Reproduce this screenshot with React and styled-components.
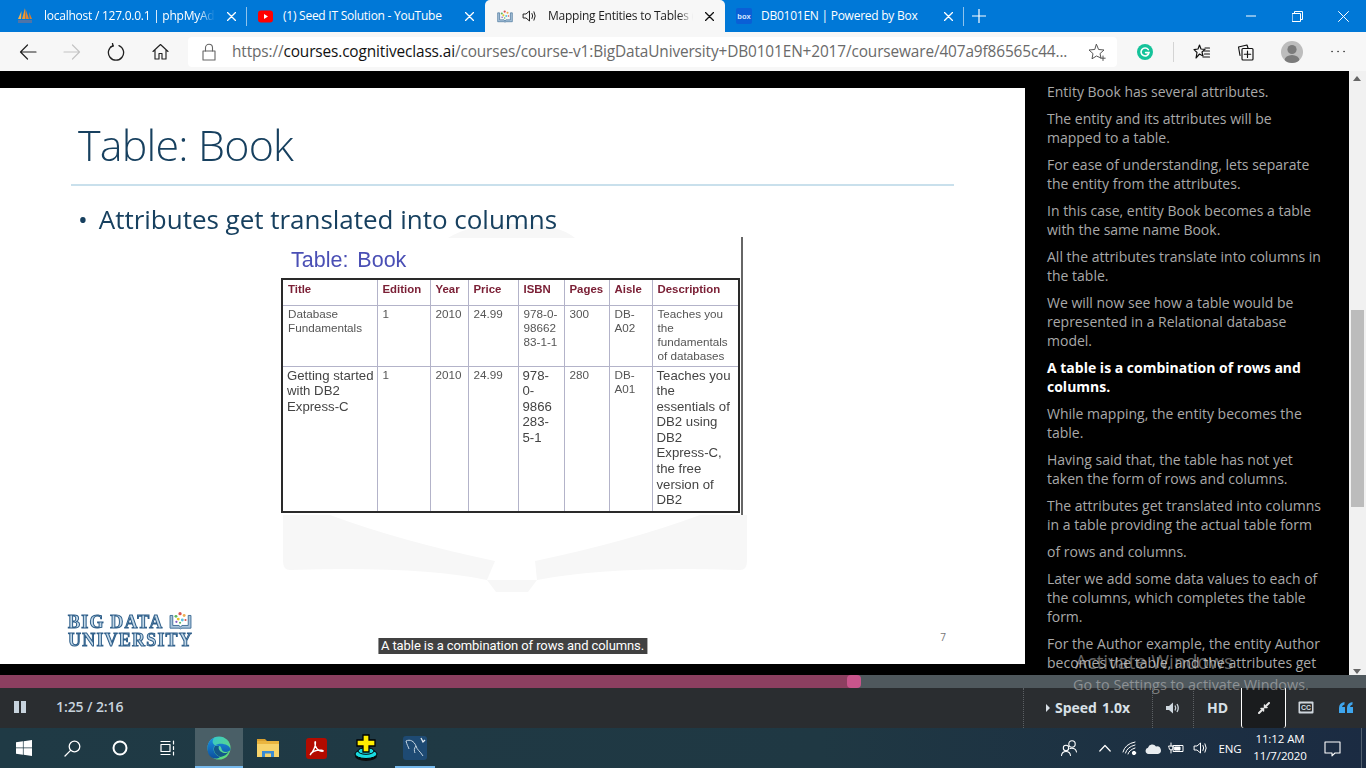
import React from "react";
import styled, { createGlobalStyle } from "styled-components";

const Global = createGlobalStyle`
  html, body { margin: 0; padding: 0; background: #000; }
  #root { width: 1366px; height: 768px; overflow: hidden; }
  * { box-sizing: border-box; }
`;

const UI = `"Open Sans", "Noto Sans", sans-serif`;

const Page = styled.div`
  position: relative;
  width: 1366px;
  height: 768px;
  display: flex;
  flex-direction: column;
  overflow: hidden;
  font-family: ${UI};
`;

/* ---------- Tab strip ---------- */
const TabStrip = styled.div`
  height: 32px;
  flex: none;
  display: flex;
  background: #0078d7;
`;
const Tab = styled.div`
  width: ${(p) => p.$w}px;
  padding-left: ${(p) => p.$pad}px;
  padding-right: 8px;
  display: flex;
  align-items: center;
  flex: none;
  position: relative;
  color: ${(p) => (p.$active ? "#1f1f1f" : "#fff")};
  background: ${(p) => (p.$active ? "#f7f7f7" : "transparent")};
  border-radius: ${(p) => (p.$active ? "5px 5px 0 0" : "0")};
  &::after {
    content: "";
    display: ${(p) => (p.$sep ? "block" : "none")};
    position: absolute;
    right: 0;
    top: 7px;
    bottom: 6px;
    width: 1px;
    background: #8fc3ec;
  }
`;
const TabIcon = styled.span`
  width: 16px;
  height: 16px;
  flex: none;
  display: flex;
  align-items: center;
  justify-content: center;
  margin-right: ${(p) => p.$gap}px;
`;
const TabTitle = styled.span`
  flex: 1;
  min-width: 0;
  overflow: hidden;
  white-space: nowrap;
  font-size: 12px;
  letter-spacing: -0.25px;
  line-height: 16px;
  ${(p) =>
    p.$fade &&
    `-webkit-mask-image: linear-gradient(90deg, #000 90%, transparent 100%);
     mask-image: linear-gradient(90deg, #000 90%, transparent 100%);`}
`;
const TabClose = styled.span`
  width: 16px;
  height: 16px;
  flex: none;
  display: flex;
  align-items: center;
  justify-content: center;
  margin-left: 8px;
`;
const SpeakerSlot = styled.span`
  position: absolute;
  left: 37px;
  top: 8px;
  width: 16px;
  height: 16px;
  display: flex;
`;
const NewTab = styled.div`
  width: 30px;
  display: flex;
  align-items: center;
  justify-content: center;
`;
const WindowControls = styled.div`
  margin-left: auto;
  display: flex;
`;
const WindowButton = styled.div`
  width: 46px;
  height: 32px;
  display: flex;
  align-items: center;
  justify-content: center;
`;

/* ---------- Address bar ---------- */
const Toolbar = styled.div`
  height: 39px;
  flex: none;
  display: flex;
  align-items: center;
  background: #f7f7f7;
  padding-left: 6px;
`;
const ToolButton = styled.div`
  width: ${(p) => p.$w || 44}px;
  height: 30px;
  flex: none;
  display: flex;
  align-items: center;
  justify-content: center;
`;
const AddressField = styled.div`
  width: 929px;
  height: 30px;
  margin-left: 6px;
  flex: none;
  display: flex;
  align-items: center;
  background: #fff;
  border-radius: 4px;
  padding-left: 14px;
`;
const Url = styled.div`
  margin-left: 16px;
  width: 845px;
  flex: none;
  font-size: 15.4px;
  letter-spacing: -0.13px;
  white-space: nowrap;
  overflow: hidden;
  color: #6a6a6a;
  b { font-weight: 400; color: #111; }
`;
const ToolDivider = styled.div`
  width: 1px;
  height: 20px;
  background: #d4d4d4;
  margin-right: 14px;
  flex: none;
`;
const Avatar = styled.div`
  width: 22px;
  height: 22px;
  border-radius: 50%;
  background: #bdbdbd;
  overflow: hidden;
`;

/* ---------- Content ---------- */
const Content = styled.div`
  height: 604px;
  flex: none;
  display: flex;
  background: #000;
`;
const VideoArea = styled.div`
  width: 1025px;
  flex: none;
  padding-top: 17px;
`;
const Slide = styled.div`
  position: relative;
  height: 576px;
  background: #fff;
  display: flex;
  flex-direction: column;
  overflow: hidden;
`;
const Watermark = styled.svg`
  position: absolute;
  left: 270px;
  top: 128px;
`;
const SlideTitle = styled.h1`
  position: relative;
  margin: 0;
  padding: 27px 0 0 78px;
  font-size: 43px;
  line-height: 60px;
  font-weight: 300;
  letter-spacing: -0.8px;
  color: #17405f;
  filter: blur(0.2px);
`;
const Rule = styled.div`
  position: relative;
  margin: 9px 0 0 71px;
  width: 883px;
  height: 2px;
  background: #c9e0ec;
`;
const Bullet = styled.div`
  position: relative;
  margin-top: 15px;
  padding-left: 78px;
  font-size: 26px;
  line-height: 36px;
  font-weight: 500;
  letter-spacing: -0.02px;
  color: #17405f;
  display: flex;
  gap: 11px;
  filter: blur(0.25px);
`;
const TableFigure = styled.div`
  position: relative;
  margin-left: 281px;
  width: 462px;
  height: 278px;
  border-right: 2px solid #666;
  filter: blur(0.3px);
`;
const FigureTitle = styled.div`
  font-family: "Liberation Sans", Arial, sans-serif;
  font-size: 21.5px;
  line-height: 24px;
  padding: 11px 0 0 10px;
  height: 41px;
  color: #4a4fb5;
  word-spacing: 3px;
`;
const BookTable = styled.table`
  width: 457px;
  table-layout: fixed;
  border-collapse: collapse;
  border: 2px solid #2a2a2a;
  font-family: "Liberation Sans", Arial, sans-serif;
`;
const HeadCell = styled.th`
  height: 26px;
  padding: 0 0 6px 5px;
  border: 1px solid #b3b3c9;
  text-align: left;
  font-size: 11.4px;
  color: #7b2036;
  vertical-align: middle;
  font-weight: 700;
`;
const DataCell = styled.td`
  padding: ${(p) => (p.$big ? "1px 0 0 4px" : "1px 0 0 5px")};
  border: 1px solid #b3b3c9;
  vertical-align: top;
  font-size: ${(p) => (p.$big ? 13.2 : 11.7)}px;
  line-height: ${(p) => p.$lh}px;
  color: ${(p) => (p.$big ? "#444" : "#555")};
  white-space: nowrap;
`;
const SlideFooter = styled.div`
  position: relative;
  margin-top: auto;
  padding: 0 0 15px 68px;
  display: flex;
  align-items: flex-end;
  justify-content: space-between;
`;
const Logo = styled.div`
  display: grid;
  grid-template-columns: 100px 25px;
  filter: blur(0.3px);
`;
const LogoLine = styled.div`
  font-family: "Liberation Serif", serif;
  font-weight: 700;
  font-size: ${(p) => p.$size}px;
  letter-spacing: ${(p) => p.$ls}px;
  line-height: 18px;
  white-space: nowrap;
  color: #c3d8e8;
  -webkit-text-stroke: 1px #2f5f8a;
  grid-column: ${(p) => p.$col};
`;
const BookMarkCell = styled.div`
  grid-column: 2;
  height: 18px;
  margin-top: -3px;
`;
const PageNumber = styled.div`
  font-size: 10px;
  color: #777;
  margin: 0 79px 5px 0;
`;
const Caption = styled.div`
  position: absolute;
  left: 50%;
  bottom: 10px;
  transform: translateX(-50%);
  height: 16px;
  padding: 0 3px;
  background: #414141;
  color: #fff;
  font-family: Roboto, sans-serif;
  font-size: 13px;
  line-height: 16px;
  letter-spacing: -0.09px;
  white-space: nowrap;
`;

const Transcript = styled.div`
  width: 324px;
  flex: none;
  padding: 11px 20px 0 22px;
  overflow: hidden;
  font-size: 14px;
  line-height: 19px;
  color: #a6a6a6;
`;
const Cue = styled.p`
  margin: 0 0 8px;
  color: ${(p) => (p.$on ? "#fff" : "#a9a9a9")};
  font-weight: ${(p) => (p.$on ? 700 : 400)};
`;
const ScrollTrack = styled.div`
  position: relative;
  width: 17px;
  flex: none;
  background: #f1f1f1;
`;
const ScrollThumb = styled.div`
  position: absolute;
  left: 2px;
  right: 2px;
  top: 239px;
  height: 197px;
  background: #bcbcbc;
`;
const ScrollArrow = styled.div`
  position: absolute;
  left: 4px;
  width: 0;
  height: 0;
  border-left: 4px solid transparent;
  border-right: 4px solid transparent;
  ${(p) => (p.$down ? "bottom: 1px; border-top: 5px solid #666;" : "top: 5px; border-bottom: 5px solid #666;")}
`;

/* ---------- Player ---------- */
const Progress = styled.div`
  height: 13px;
  flex: none;
  background: #4f585d;
`;
const ProgressFill = styled.div`
  position: relative;
  height: 100%;
  background: #8c3f60;
`;
const ProgressKnob = styled.div`
  position: absolute;
  right: -7px;
  top: 0;
  width: 14px;
  height: 13px;
  border-radius: 4px;
  background: #c9558c;
`;
const Controls = styled.div`
  height: 40px;
  flex: none;
  display: flex;
  align-items: stretch;
  background: #2a2d30;
  color: #d5dde4;
`;
const PauseCell = styled.div`
  width: 56px;
  padding-left: 14px;
  padding-bottom: 2px;
  display: flex;
  align-items: center;
  gap: 2px;
`;
const PauseBar = styled.span`
  width: 5px;
  height: 12px;
  background: #c7d3dd;
`;
const TimeLabel = styled.div`
  font-size: 14px;
  font-weight: 600;
  line-height: 38px;
  color: #c7d3dd;
  letter-spacing: -0.1px;
`;
const ControlCell = styled.div`
  width: ${(p) => p.$w}px;
  flex: none;
  display: flex;
  align-items: center;
  justify-content: center;
  padding-bottom: 1px;
  font-size: 14px;
  font-weight: 700;
  color: #d8e0e6;
  border-left: ${(p) => (p.$dotted ? "1px dotted #5c6064" : "none")};
  ${(p) => p.$first && "margin-left: auto;"}
`;
const FullscreenCell = styled(ControlCell)`
  background: #1a1c1e;
  border-left: 1px solid #fff;
  border-right: 1px solid #fff;
  border-radius: 0 0 3px 3px;
`;
const SpeedValue = styled.span`
  margin-left: 5px;
`;
const SpeedCaret = styled.span`
  width: 0;
  height: 0;
  border-top: 4px solid transparent;
  border-bottom: 4px solid transparent;
  border-left: 4px solid #d8e0e6;
  margin-right: 5px;
`;

/* ---------- Taskbar ---------- */
const Taskbar = styled.div`
  height: 40px;
  flex: none;
  display: flex;
  background: linear-gradient(90deg, #1f3a45 0%, #1f3843 60%, #1b2b42 100%);
  color: #fff;
`;
const TaskSlot = styled.div`
  position: relative;
  width: ${(p) => p.$w || 48}px;
  flex: none;
  display: flex;
  align-items: center;
  justify-content: center;
  background: ${(p) => (p.$active ? "#4a5f67" : "transparent")};
  margin-left: ${(p) => p.$ml || 0}px;
  ${(p) =>
    p.$running &&
    `&::after { content: ""; position: absolute; left: ${p.$inset || 0}px; right: ${p.$inset || 0}px; bottom: 0; height: 2px; background: #76b9ed; }`}
`;
const Tray = styled.div`
  margin-left: auto;
  display: flex;
`;
const TrayItem = styled.div`
  width: ${(p) => p.$w}px;
  flex: none;
  display: flex;
  align-items: center;
  justify-content: center;
  font-size: 11.5px;
  letter-spacing: -0.1px;
`;
const Clock = styled.div`
  text-align: center;
  font-size: 11.5px;
  line-height: 17px;
  letter-spacing: -0.1px;
  margin-bottom: 2px;
`;
const ShowDesktop = styled.div`
  width: 20px;
  flex: none;
  position: relative;
  &::after { content: ""; position: absolute; left: 15px; top: 0; bottom: 0; width: 1px; background: #52606f; }
`;
const Watermarks = styled.div`
  position: absolute;
  left: 1073px;
  top: 650px;
  width: 290px;
  pointer-events: none;
  color: rgba(205, 205, 205, 0.5);
`;
const ActivateTitle = styled.div`
  font-size: 19.3px;
  line-height: 24px;
  padding-left: 2px;
  white-space: nowrap;
`;
const ActivateHint = styled.div`
  font-size: 14.4px;
  line-height: 22px;
  white-space: nowrap;
`;

/* ---------- Icons ---------- */
const Svg = ({ s = 16, w, h, children, stroke = "currentColor", sw = 1.2, vb }) => (
  <svg width={w || s} height={h || s} viewBox={vb || `0 0 ${w || s} ${h || s}`} fill="none" stroke={stroke} strokeWidth={sw} strokeLinecap="round" strokeLinejoin="round">
    {children}
  </svg>
);
const CloseIcon = ({ c = "#fff", s = 9, sw = 1.3 }) => (
  <Svg s={s} stroke={c} sw={sw}><path d={`M.5.5 L${s - 0.5} ${s - 0.5} M${s - 0.5} .5 L.5 ${s - 0.5}`} /></Svg>
);
const PmaIcon = () => (
  <svg width="16" height="16" viewBox="0 0 16 16">
    <path d="M8 0 L5 11 L8 11Z" fill="#f29a2e" />
    <path d="M8.5 1 L8.5 11 L12 11Z" fill="#e8832a" />
    <path d="M4.5 3 L1 11 L4 11Z" fill="#f4b04c" />
    <path d="M12 4 L15 11 L12.7 11Z" fill="#d9802c" />
    <rect x="1" y="12" width="14" height="3" fill="#4f74a8" />
  </svg>
);
const YouTubeIcon = () => (
  <svg width="15" height="15" viewBox="0 0 15 15">
    <rect x="0" y="1.5" width="15" height="12" rx="3" fill="#f00" />
    <path d="M6 5 L10 7.5 L6 10Z" fill="#fff" />
  </svg>
);
const BookMark = ({ w = 16, h = 14 }) => (
  <svg width={w} height={h} viewBox="0 0 25 22">
    <path d="M1 6 L1 20 L11 20 Q12.5 21.5 14 20 L24 20 L24 6 L21 6 L21 17 L14 17 L12.5 19 L11 17 L4 17 L4 6Z" fill="#a9c3da" stroke="#3a6a94" strokeWidth="1" />
    <circle cx="12" cy="4" r="1.8" fill="#d9534f" />
    <circle cx="7.5" cy="7" r="1.6" fill="#5cb85c" />
    <circle cx="16.5" cy="6" r="1.6" fill="#f0ad4e" />
    <circle cx="10" cy="10" r="1.6" fill="#e6c229" />
    <circle cx="14.5" cy="11" r="1.6" fill="#5bc0de" />
    <circle cx="18" cy="11" r="1.2" fill="#d9534f" />
    <circle cx="8" cy="13" r="1.2" fill="#7e57c2" />
    <circle cx="12" cy="14" r="1.2" fill="#5cb85c" />
  </svg>
);
const SpeakerIcon = ({ c = "#222", s = 16 }) => (
  <Svg s={s} vb="0 0 16 16" stroke={c} sw={1}>
    <path d="M1.5 6 H4 L7.5 3 V13 L4 10 H1.5Z" />
    <path d="M10 5.5 Q11.5 8 10 10.5 M12 3.8 Q14.5 8 12 12.2" />
  </Svg>
);
const BoxIcon = () => (
  <svg width="16" height="16" viewBox="0 0 16 16">
    <rect width="16" height="16" rx="2" fill="#0a5fd6" />
    <text x="8" y="10.5" fontSize="7.5" fontFamily="Liberation Sans, sans-serif" fontWeight="700" fill="#d8e8ff" textAnchor="middle">box</text>
  </svg>
);
const BackIcon = ({ c = "#222", flip }) => (
  <Svg s={18} stroke={c} sw={1.2}>
    <g transform={flip ? "matrix(-1 0 0 1 18 0)" : undefined}><path d="M1.5 9 H17 M8.5 2 L1.5 9 L8.5 16" /></g>
  </Svg>
);
const RefreshIcon = () => (
  <Svg s={18} stroke="#222" sw={1.3}>
    <path d="M6 2.6 A7.6 7.6 0 1 0 12 2.6" />
    <path d="M5.5 0.5 L6.2 3.2 L3.5 4" />
  </Svg>
);
const HomeIcon = () => (
  <Svg s={17} stroke="#222" sw={1.15}>
    <path d="M1 8.5 L8.5 1.5 L16 8.5 M3 7 V16 H7 V10.5 H10 V16 H14 V7" />
  </Svg>
);
const LockIcon = () => (
  <Svg w={14} h={18} stroke="#666" sw={1.1}>
    <path d="M3.5 8 V4.8 A3.5 3.5 0 0 1 10.5 4.8 V8" />
    <rect x="1" y="8" width="12" height="9" />
  </Svg>
);
const StarPlusIcon = () => (
  <Svg s={18} stroke="#555" sw={1}>
    <path d="M8.5 1.5 L10.6 6.5 L16 7 L12 10.6 L13 15 L8.5 13 L4 15.8 L5 10.6 L1 7 L6.4 6.5Z" />
    <path d="M15 13 V17.5 M12.8 15.2 H17.2" />
  </Svg>
);
const GrammarlyIcon = () => (
  <svg width="16" height="16" viewBox="0 0 16 16">
    <circle cx="8" cy="8" r="8" fill="#15c39a" />
    <path d="M11.3 5.6 A4 4 0 1 0 12 8.6 H8.6" fill="none" stroke="#fff" strokeWidth="1.6" strokeLinecap="round" />
  </svg>
);
const FavListIcon = () => (
  <Svg s={18} stroke="#111" sw={1.15}>
    <path d="M6.5 2 L8 6 L12 6.4 L9 9 L10 13 L6.5 11 L3 15 L4 9.5 L1 6.6 L5 6Z" />
    <path d="M11 8 H16.5 M11.5 11 H16.5 M10 14 H16.5 M12 5 H16.5" />
  </Svg>
);
const CollectionsIcon = () => (
  <Svg s={18} stroke="#111" sw={1.15}>
    <path d="M3 12.5 L1.5 4 L10 2 L11 5" />
    <rect x="5" y="5.5" width="11" height="11.5" rx="1" />
    <path d="M10.5 8 V14.5 M7.3 11.2 H13.7" />
  </Svg>
);
const AvatarArt = () => (
  <svg width="22" height="22" viewBox="0 0 22 22">
    <circle cx="11" cy="8.5" r="4.6" fill="#7b7b7b" />
    <ellipse cx="11" cy="19.5" rx="7.5" ry="5.5" fill="#7b7b7b" />
  </svg>
);
const CompressIcon = () => (
  <Svg s={12} stroke="#e8e8e8" sw={2}>
    <path d="M1 11 L4.5 7.5 M11 1 L7.5 4.5" />
    <path d="M3 6.5 H5.5 V9 M9 5.5 H6.5 V3" strokeWidth="1.5" />
  </Svg>
);
const VolumeIcon = () => (
  <svg width="15" height="14" viewBox="0 0 15 14">
    <path d="M0 5 H3 L7 1.5 V12.5 L3 9 H0Z" fill="#cfd8df" />
    <path d="M9 4.5 Q10.5 7 9 9.5 M11 3 Q13.5 7 11 11" fill="none" stroke="#cfd8df" strokeWidth="1.3" />
  </svg>
);
const CcIcon = () => (
  <svg width="16" height="13" viewBox="0 0 16 13">
    <rect x="0.5" y="0.5" width="15" height="12" rx="1" fill="#cfd6dc" />
    <rect x="2" y="2.5" width="12" height="8" rx="1" fill="#2a2d30" />
    <text x="8" y="9" fontSize="7" fontWeight="700" fontFamily="Liberation Sans, sans-serif" fill="#d5dde4" textAnchor="middle">CC</text>
  </svg>
);
const QuoteIcon = () => (
  <svg width="14" height="12" viewBox="0 0 14 12">
    <path d="M0 6 Q0 1 5.5 0 V2.4 Q3.3 3 3 5 H6 V11 H0Z M8 6 Q8 1 13.5 0 V2.4 Q11.3 3 11 5 H14 V11 H8Z" fill="#3ea6ee" />
  </svg>
);
const WinLogo = () => (
  <svg width="16" height="16" viewBox="0 0 16 16" fill="#fff">
    <path d="M0 2.3 L6.9 1.3 V7.5 H0Z M7.6 1.2 L16 0 V7.5 H7.6Z M0 8.3 H6.9 V14.7 L0 13.7Z M7.6 8.3 H16 V16 L7.6 14.8Z" />
  </svg>
);
const SearchIcon = () => (
  <Svg s={17} stroke="#fff" sw={1.3}>
    <circle cx="10.5" cy="6.5" r="5.3" /><path d="M6.6 10.4 L1 16" />
  </Svg>
);
const CortanaIcon = () => (
  <Svg s={16} stroke="#fff" sw={2}><circle cx="8" cy="8" r="6.5" /></Svg>
);
const TaskViewIcon = () => (
  <Svg w={16} h={16} stroke="#fff" sw={1.2}>
    <path d="M1 1.5 H10 M1 14.5 H10 M1 4.5 H10 V11.5 H1Z M13.5 1 V4 M13.5 6.5 V9.5 M13.5 12 V15" />
  </Svg>
);
const EdgeIcon = () => (
  <svg width="24" height="24" viewBox="0 0 24 24">
    <defs>
      <linearGradient id="eg1" x1="0" y1="0" x2="1" y2="1"><stop offset="0" stopColor="#2fc4d8" /><stop offset="1" stopColor="#6ce06a" /></linearGradient>
      <linearGradient id="eg2" x1="0" y1="0" x2="0" y2="1"><stop offset="0" stopColor="#1a8fe0" /><stop offset="1" stopColor="#0c4f9c" /></linearGradient>
    </defs>
    <circle cx="12" cy="12" r="11.5" fill="url(#eg1)" />
    <path d="M23.5 13.5 C23 8 12 6 8 9.5 C5 12.5 7 19 13 21 C10 23.8 4 23 1.5 18 C-1 12 1 4 7 2 C4 6 6 10 12 10 C16 10 12.5 16 19 16 C21 16 23 15 23.5 13.5Z" fill="url(#eg2)" />
    <path d="M8 10 C5.5 13 7.5 19 13.5 21 C17 20.5 20 18.5 22 15.5 C20.5 17 18 17.5 15.5 16.5 C12 15 11 12 12 10Z" fill="#0d4a88" opacity=".9" />
  </svg>
);
const FolderIcon = () => (
  <svg width="22" height="20" viewBox="0 0 22 20">
    <path d="M0 1 H8 L10 3 H0Z" fill="#d9a02e" />
    <rect y="3" width="22" height="16" fill="#f7d36b" />
    <rect y="3" width="22" height="3" fill="#eab53f" />
    <path d="M5 19 V13 H17 V19 H14 V15.5 H8 V19Z" fill="#3b8bd4" />
  </svg>
);
const PdfIcon = () => (
  <svg width="21" height="21" viewBox="0 0 21 21">
    <rect width="21" height="21" rx="3" fill="#b30b00" />
    <path d="M4 17 C7 14 10 8 9.5 4 C9 3 8.5 5 9.5 8 C11 12 14 13.5 17 13.2 C18 12.5 14 11.5 10.5 12.5 C8 13 5 15 4 17Z" fill="none" stroke="#fff" strokeWidth="1.3" />
  </svg>
);
const InstallIcon = () => (
  <svg width="24" height="28" viewBox="0 0 24 28">
    <ellipse cx="12" cy="22" rx="11" ry="5" fill="#0b0b0b" />
    <ellipse cx="12" cy="20" rx="11" ry="4.5" fill="#19dbe0" stroke="#000" />
    <ellipse cx="12" cy="17" rx="8" ry="3.3" fill="#19dbe0" stroke="#000" />
    <path d="M9 1 H15 V6 H21 V12 H15 V18 H9 V12 H3 V6 H9Z" fill="#ffee00" stroke="#000" strokeWidth="1.3" />
  </svg>
);
const MySqlIcon = () => (
  <svg width="24" height="24" viewBox="0 0 24 24">
    <rect width="24" height="24" rx="3" fill="#1e4a73" />
    <path d="M3 5 C7 3 11 5 13 10 C14 14 17 15 20 20 M3 5 C4 9 5 10 6 13 M13 10 C11 12 11 15 12 17" fill="none" stroke="#c6d6e2" strokeWidth="1" />
    <path d="M18 2 L20 6 L22 4" fill="none" stroke="#e6eef4" strokeWidth="1.3" />
  </svg>
);
const PeopleIcon = () => (
  <Svg s={18} stroke="#fff" sw={1.1}>
    <circle cx="12" cy="5" r="3.2" /><circle cx="6" cy="9" r="2.7" />
    <path d="M1.5 16.5 Q2 12.5 6 12.5 Q10 12.5 10.5 16.5 M10 9.5 Q15.5 8.5 16.5 13" />
  </Svg>
);
const ChevronUp = () => <Svg w={12} h={8} stroke="#fff" sw={1.2}><path d="M.8 7 L6 1.5 L11.2 7" /></Svg>;
const WifiIcon = () => (
  <Svg s={16} stroke="#fff" sw={1}>
    <path d="M1 12 Q3 4 13 2 M3.5 13 Q5 7 13 5 M6 14 Q7 10 13 8" />
    <circle cx="12" cy="13" r="1.7" fill="#fff" />
  </Svg>
);
const CloudIcon = () => (
  <svg width="16" height="11" viewBox="0 0 16 11">
    <path d="M3.5 11 A3.2 3.2 0 0 1 3 4.7 A4.4 4.4 0 0 1 11 3.5 A3.8 3.8 0 0 1 13 11Z" fill="#e8ecef" />
  </svg>
);
const BatteryIcon = () => (
  <Svg w={16} h={12} stroke="#fff" sw={1}>
    <rect x="5.5" y="3.5" width="9.5" height="6" /><rect x="7" y="5" width="5" height="3" fill="#fff" />
    <path d="M3 1 V4 M1 4 H5 V6 Q5 8 3 8 Q1 8 1 6Z M3 8 V11" />
  </Svg>
);
const NotifyIcon = () => (
  <Svg s={17} stroke="#fff" sw={1.1}><path d="M1 2 H16 V13 H11 L8 15.8 V13 H1Z" /></Svg>
);

/* ---------- Data ---------- */
const tabs = [
  { w: 247, pad: 17, gap: 11, icon: <PmaIcon />, title: "localhost / 127.0.0.1 | phpMyAdmin", fade: true, sep: true },
  { w: 238, pad: 10, gap: 10, icon: <YouTubeIcon />, title: "(1) Seed IT Solution - YouTube" },
  { w: 240, pad: 12, gap: 35, icon: <BookMark />, title: "Mapping Entities to Tables (RDB)", fade: true, active: true, speaker: true },
  { w: 239, pad: 11, gap: 9, icon: <BoxIcon />, title: "DB0101EN | Powered by Box", sep: true },
];

const columns = [
  { name: "Title", w: 95 },
  { name: "Edition", w: 53 },
  { name: "Year", w: 38 },
  { name: "Price", w: 50 },
  { name: "ISBN", w: 46 },
  { name: "Pages", w: 45 },
  { name: "Aisle", w: 43 },
  { name: "Description", w: 87 },
];
const rows = [
  {
    h: 61,
    big: [],
    cells: [
      ["Database", "Fundamentals"], ["1"], ["2010"], ["24.99"],
      ["978-0-", "98662", "83-1-1"], ["300"], ["DB-", "A02"],
      ["Teaches you", "the", "fundamentals", "of databases"],
    ],
  },
  {
    h: 146,
    big: [0, 4, 7],
    cells: [
      ["Getting started", "with DB2", "Express-C"], ["1"], ["2010"], ["24.99"],
      ["978-", "0-", "9866", "283-", "5-1"], ["280"], ["DB-", "A01"],
      ["Teaches you", "the", "essentials of", "DB2 using", "DB2", "Express-C,", "the free", "version of", "DB2"],
    ],
  },
];

const cues = [
  "Entity Book has several attributes.",
  "The entity and its attributes will be mapped to a table.",
  "For ease of understanding, lets separate the entity from the attributes.",
  "In this case, entity Book becomes a table with the same name Book.",
  "All the attributes translate into columns in the table.",
  "We will now see how a table would be represented in a Relational database model.",
  { on: true, text: "A table is a combination of rows and columns." },
  "While mapping, the entity becomes the table.",
  "Having said that, the table has not yet taken the form of rows and columns.",
  "The attributes get translated into columns in a table providing the actual table form",
  "of rows and columns.",
  "Later we add some data values to each of the columns, which completes the table form.",
  "For the Author example, the entity Author becomes the table, and the attributes get",
];

const played = 85;
const total = 136;

export default function App() {
  return (
    <Page>
      <Global />
      <TabStrip>
        {tabs.map((t) => (
          <Tab key={t.title} $w={t.w} $pad={t.pad} $active={t.active} $sep={t.sep}>
            <TabIcon $gap={t.gap}>{t.icon}</TabIcon>
            <TabTitle $fade={t.fade}>{t.title}</TabTitle>
            <TabClose><CloseIcon c={t.active ? "#111" : "#fff"} /></TabClose>
            {t.speaker && <SpeakerSlot><SpeakerIcon /></SpeakerSlot>}
          </Tab>
        ))}
        <NewTab>
          <Svg s={14} stroke="#fff" sw={1.2}><path d="M7 0 V14 M0 7 H14" /></Svg>
        </NewTab>
        <WindowControls>
          <WindowButton><Svg w={10} h={2} stroke="#fff" sw={1}><path d="M0 1 H10" /></Svg></WindowButton>
          <WindowButton>
            <Svg s={11} stroke="#fff" sw={1}><rect x="0.5" y="2.5" width="8" height="8" /><path d="M2.5 2.5 V.5 H10.5 V8.5 H8.5" /></Svg>
          </WindowButton>
          <WindowButton><CloseIcon s={11} sw={1} /></WindowButton>
        </WindowControls>
      </TabStrip>

      <Toolbar>
        <ToolButton><BackIcon /></ToolButton>
        <ToolButton><BackIcon flip c="#c4c4c4" /></ToolButton>
        <ToolButton><RefreshIcon /></ToolButton>
        <ToolButton><HomeIcon /></ToolButton>
        <AddressField>
          <LockIcon />
          <Url>https://<b>courses.cognitiveclass.ai</b>/courses/course-v1:BigDataUniversity+DB0101EN+2017/courseware/407a9f86565c44...</Url>
          <ToolButton $w={40}><StarPlusIcon /></ToolButton>
        </AddressField>
        <ToolButton $w={56}><GrammarlyIcon /></ToolButton>
        <ToolDivider />
        <ToolButton $w={28}><FavListIcon /></ToolButton>
        <ToolButton $w={60}><CollectionsIcon /></ToolButton>
        <ToolButton $w={32}><Avatar><AvatarArt /></Avatar></ToolButton>
        <ToolButton $w={60}>
          <Svg w={14} h={3} stroke="#222" sw={1.5}><path d="M1 1.5 H1.1 M7 1.5 H7.1 M13 1.5 H13.1" /></Svg>
        </ToolButton>
      </Toolbar>

      <Content>
        <VideoArea>
          <Slide>
            <Watermark width="490" height="380" viewBox="0 0 490 380" fill="#f7f7f7">
              <path d="M178 22 Q200 8 240 8 Q285 6 305 22Z" />
              <path d="M13 299 L60 299 Q130 325 225 345 L217 364 Q150 350 20 354 Q13 354 13 345Z" />
              <path d="M477 299 L430 299 Q360 325 265 345 L267 364 Q340 350 470 354 Q477 354 477 345Z" />
              <path d="M217 364 L267 364 L258 376 L226 376Z" />
            </Watermark>
            <SlideTitle>Table: Book</SlideTitle>
            <Rule />
            <Bullet><span>•</span><span>Attributes get translated into columns</span></Bullet>
            <TableFigure>
              <FigureTitle>Table: Book</FigureTitle>
              <BookTable>
                <colgroup>
                  {columns.map((c) => <col key={c.name} width={c.w} />)}
                </colgroup>
                <thead>
                  <tr>{columns.map((c) => <HeadCell key={c.name}>{c.name}</HeadCell>)}</tr>
                </thead>
                <tbody>
                  {rows.map((r) => (
                    <tr key={r.h} style={{ height: r.h }}>
                      {r.cells.map((lines, i) => {
                        const big = r.big.includes(i);
                        return (
                          <DataCell key={i} $big={big} $lh={big ? 15.6 : 14.2}>
                            {lines.map((l, j) => <div key={j}>{l}</div>)}
                          </DataCell>
                        );
                      })}
                    </tr>
                  ))}
                </tbody>
              </BookTable>
            </TableFigure>
            <SlideFooter>
              <Logo>
                <LogoLine $size={18} $ls={1.2} $col="1">BIG DATA</LogoLine>
                <BookMarkCell><BookMark w={25} h={20} /></BookMarkCell>
                <LogoLine $size={18} $ls={1.2} $col="1 / span 2">UNIVERSITY</LogoLine>
              </Logo>
              <PageNumber>7</PageNumber>
            </SlideFooter>
            <Caption>A table is a combination of rows and columns.</Caption>
          </Slide>
        </VideoArea>
        <Transcript>
          {cues.map((c, i) =>
            typeof c === "string" ? <Cue key={i}>{c}</Cue> : <Cue key={i} $on>{c.text}</Cue>
          )}
        </Transcript>
        <ScrollTrack>
          <ScrollArrow />
          <ScrollThumb />
          <ScrollArrow $down />
        </ScrollTrack>
      </Content>

      <Progress>
        <ProgressFill style={{ width: `${(played / total) * 100}%` }}>
          <ProgressKnob />
        </ProgressFill>
      </Progress>

      <Controls>
        <PauseCell><PauseBar /><PauseBar /></PauseCell>
        <TimeLabel>1:25 / 2:16</TimeLabel>
        <ControlCell $w={129} $first $dotted><SpeedCaret />Speed<SpeedValue>1.0x</SpeedValue></ControlCell>
        <ControlCell $w={41} $dotted><VolumeIcon /></ControlCell>
        <ControlCell $w={48} $dotted>HD</ControlCell>
        <FullscreenCell $w={45}><CompressIcon /></FullscreenCell>
        <ControlCell $w={40}><CcIcon /></ControlCell>
        <ControlCell $w={40}><QuoteIcon /></ControlCell>
      </Controls>

      <Taskbar>
        <TaskSlot><WinLogo /></TaskSlot>
        <TaskSlot><SearchIcon /></TaskSlot>
        <TaskSlot><CortanaIcon /></TaskSlot>
        <TaskSlot><TaskViewIcon /></TaskSlot>
        <TaskSlot $ml={3} $active $running><EdgeIcon /></TaskSlot>
        <TaskSlot $w={49}><FolderIcon /></TaskSlot>
        <TaskSlot $w={49}><PdfIcon /></TaskSlot>
        <TaskSlot $w={49}><InstallIcon /></TaskSlot>
        <TaskSlot $w={50} $running $inset={5}><MySqlIcon /></TaskSlot>
        <Tray>
          <TrayItem $w={38}><PeopleIcon /></TrayItem>
          <TrayItem $w={34}><ChevronUp /></TrayItem>
          <TrayItem $w={16}><WifiIcon /></TrayItem>
          <TrayItem $w={30}><CloudIcon /></TrayItem>
          <TrayItem $w={16}><BatteryIcon /></TrayItem>
          <TrayItem $w={34}><SpeakerIcon c="#fff" /></TrayItem>
          <TrayItem $w={24}>ENG</TrayItem>
          <TrayItem $w={76}><Clock>11:12 AM<br />11/7/2020</Clock></TrayItem>
          <TrayItem $w={28}><NotifyIcon /></TrayItem>
          <ShowDesktop />
        </Tray>
      </Taskbar>

      <Watermarks>
        <ActivateTitle>Activate Windows</ActivateTitle>
        <ActivateHint>Go to Settings to activate Windows.</ActivateHint>
      </Watermarks>
    </Page>
  );
}
